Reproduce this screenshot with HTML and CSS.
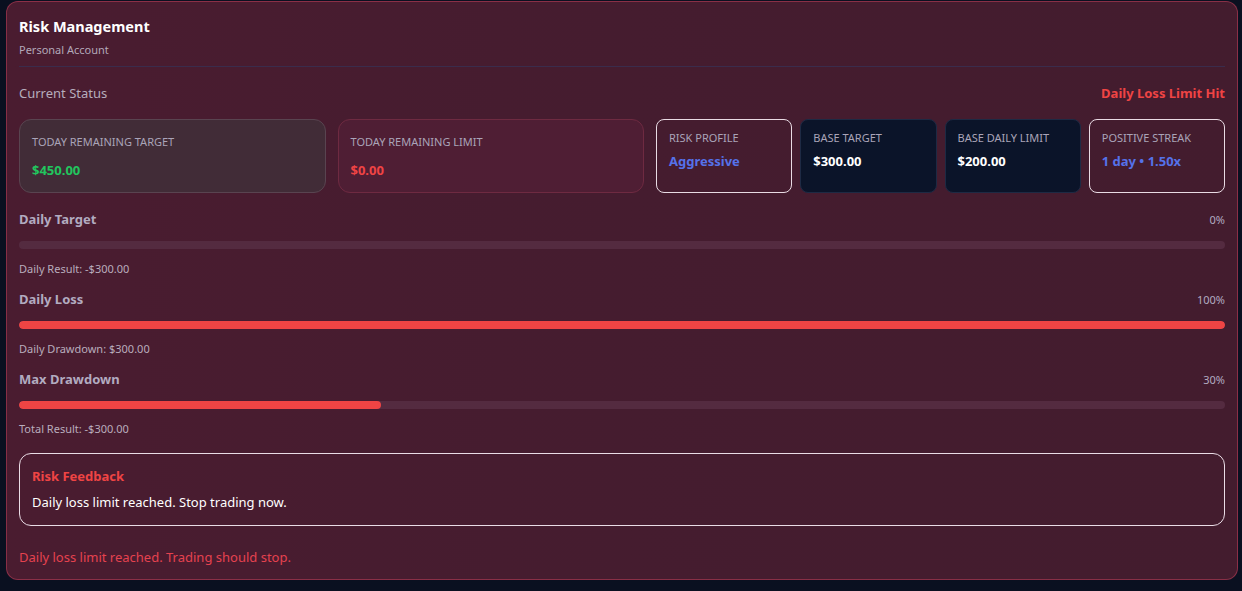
FILE: index.html
```html
<!DOCTYPE html>
<html>
<head>
<meta charset="utf-8">
<link rel="stylesheet" href="styles.css">
</head>
<body>
<div class="page">
  <section class="panel">
    <header class="panel-head">
      <h1 class="title">Risk Management</h1>
      <div class="subtitle">Personal Account</div>
    </header>

    <div class="status-row">
      <span class="status-label">Current Status</span>
      <span class="status-alert">Daily Loss Limit Hit</span>
    </div>

    <div class="stats">
      <div class="big-card big-neutral">
        <div class="big-label">TODAY REMAINING TARGET</div>
        <div class="big-value green">$450.00</div>
      </div>
      <div class="big-card big-danger">
        <div class="big-label">TODAY REMAINING LIMIT</div>
        <div class="big-value red">$0.00</div>
      </div>
      <div class="small-grid">
        <div class="small-card outline">
          <div class="small-label">RISK PROFILE</div>
          <div class="small-value blue">Aggressive</div>
        </div>
        <div class="small-card navy">
          <div class="small-label">BASE TARGET</div>
          <div class="small-value">$300.00</div>
        </div>
        <div class="small-card navy">
          <div class="small-label">BASE DAILY LIMIT</div>
          <div class="small-value">$200.00</div>
        </div>
        <div class="small-card outline">
          <div class="small-label">POSITIVE STREAK</div>
          <div class="small-value blue">1 day • 1.50x</div>
        </div>
      </div>
    </div>

    <div class="meter">
      <div class="meter-head"><span class="meter-name">Daily Target</span><span class="meter-pct">0%</span></div>
      <div class="track"><div class="fill" style="width:0%"></div></div>
      <div class="meter-note">Daily Result: -$300.00</div>
    </div>
    <div class="meter">
      <div class="meter-head"><span class="meter-name">Daily Loss</span><span class="meter-pct">100%</span></div>
      <div class="track"><div class="fill" style="width:100%"></div></div>
      <div class="meter-note">Daily Drawdown: $300.00</div>
    </div>
    <div class="meter">
      <div class="meter-head"><span class="meter-name">Max Drawdown</span><span class="meter-pct">30%</span></div>
      <div class="track"><div class="fill" style="width:30%"></div></div>
      <div class="meter-note">Total Result: -$300.00</div>
    </div>

    <div class="feedback">
      <div class="feedback-title">Risk Feedback</div>
      <div class="feedback-text">Daily loss limit reached. Stop trading now.</div>
    </div>

    <p class="footer-warning">Daily loss limit reached. Trading should stop.</p>
  </section>
</div>
</body>
</html>
```

FILE: styles.css
```css
* { box-sizing: border-box; }
html, body { margin: 0; padding: 0; }
body {
  background: #0a1020;
  font-family: "Noto Sans", "Open Sans", sans-serif;
  color: #f3eef3;
  width: 1242px;
  height: 591px;
  overflow: hidden;
}
.page { padding: 1px 4px 12px 6px; }
.panel {
  border: 1px solid rgba(220, 70, 100, 0.45);
  border-radius: 12px;
  background: linear-gradient(90deg, #4a1c30 0%, #451c2f 50%, #431c2e 100%);
  padding: 12px 12px 12px 12px;
}
.panel-head {
  border-bottom: 1px solid #3a2c4c;
  padding-bottom: 8px;
}
.title {
  margin: 0;
  font-size: 14.5px;
  line-height: 24px;
  font-weight: 700;
  color: #ffffff;
}
.subtitle {
  margin-top: 4px;
  font-size: 11px;
  line-height: 16px;
  color: #b3a8b9;
}
.status-row {
  margin-top: 16px;
  display: flex;
  justify-content: space-between;
  align-items: center;
  height: 20px;
}
.status-label { font-size: 13px; color: #b6acbc; }
.status-alert { font-size: 13px; font-weight: 700; color: #ef4444; }

.stats {
  margin-top: 16px;
  display: grid;
  grid-template-columns: 1fr 1fr 569px;
  gap: 12px;
}
.big-card {
  border-radius: 12px;
  padding: 14px 12px 12px;
  border: 1px solid;
  height: 74px;
}
.big-neutral { background: #412c37; border-color: #594450; }
.big-danger { background: #4f1e34; border-color: #6e2a41; }
.big-label { font-size: 11px; line-height: 16px; color: #aaa4b8; }
.big-value { margin-top: 10px; font-size: 13px; line-height: 20px; font-weight: 700; }
.green { color: #22c55e; }
.red { color: #ef4444; }
.blue { color: #5572ea; }

.small-grid {
  display: grid;
  grid-template-columns: repeat(4, 1fr);
  gap: 8px;
}
.small-card {
  border-radius: 8px;
  padding: 11px 12px;
  border: 1px solid;
  height: 74px;
}
.outline { border-color: #e9dbe4; background: transparent; }
.navy { background: #0b1429; border-color: #1e2a44; }
.small-label { font-size: 11px; line-height: 14px; color: #aaa4b8; }
.small-value { margin-top: 6px; font-size: 13px; line-height: 20px; font-weight: 700; color: #ffffff; }
.small-value.blue { color: #5572ea; }

.meter { margin-top: 16px; }
.meter + .meter { margin-top: 12px; }
.meter-head {
  display: flex;
  justify-content: space-between;
  align-items: center;
  height: 20px;
}
.meter-name { font-size: 13px; font-weight: 700; color: #b2abc0; }
.meter-pct { font-size: 11px; color: #b2abc0; }
.track {
  margin-top: 12px;
  height: 8px;
  border-radius: 4px;
  background: #542b40;
  overflow: hidden;
}
.fill { height: 100%; border-radius: 4px; background: #ef4444; }
.meter-note {
  margin-top: 12px;
  font-size: 11px;
  line-height: 16px;
  color: #b9adbd;
}

.feedback {
  margin-top: 16px;
  border: 1px solid #eadce6;
  border-radius: 12px;
  padding: 12px 12px 13px;
}
.feedback-title { font-size: 13px; line-height: 20px; font-weight: 700; color: #ef4444; }
.feedback-text { margin-top: 6px; font-size: 13px; line-height: 20px; color: #ffffff; }

.footer-warning {
  margin: 21px 0 0;
  font-size: 13px;
  line-height: 20px;
  color: #e5424f;
}
```
